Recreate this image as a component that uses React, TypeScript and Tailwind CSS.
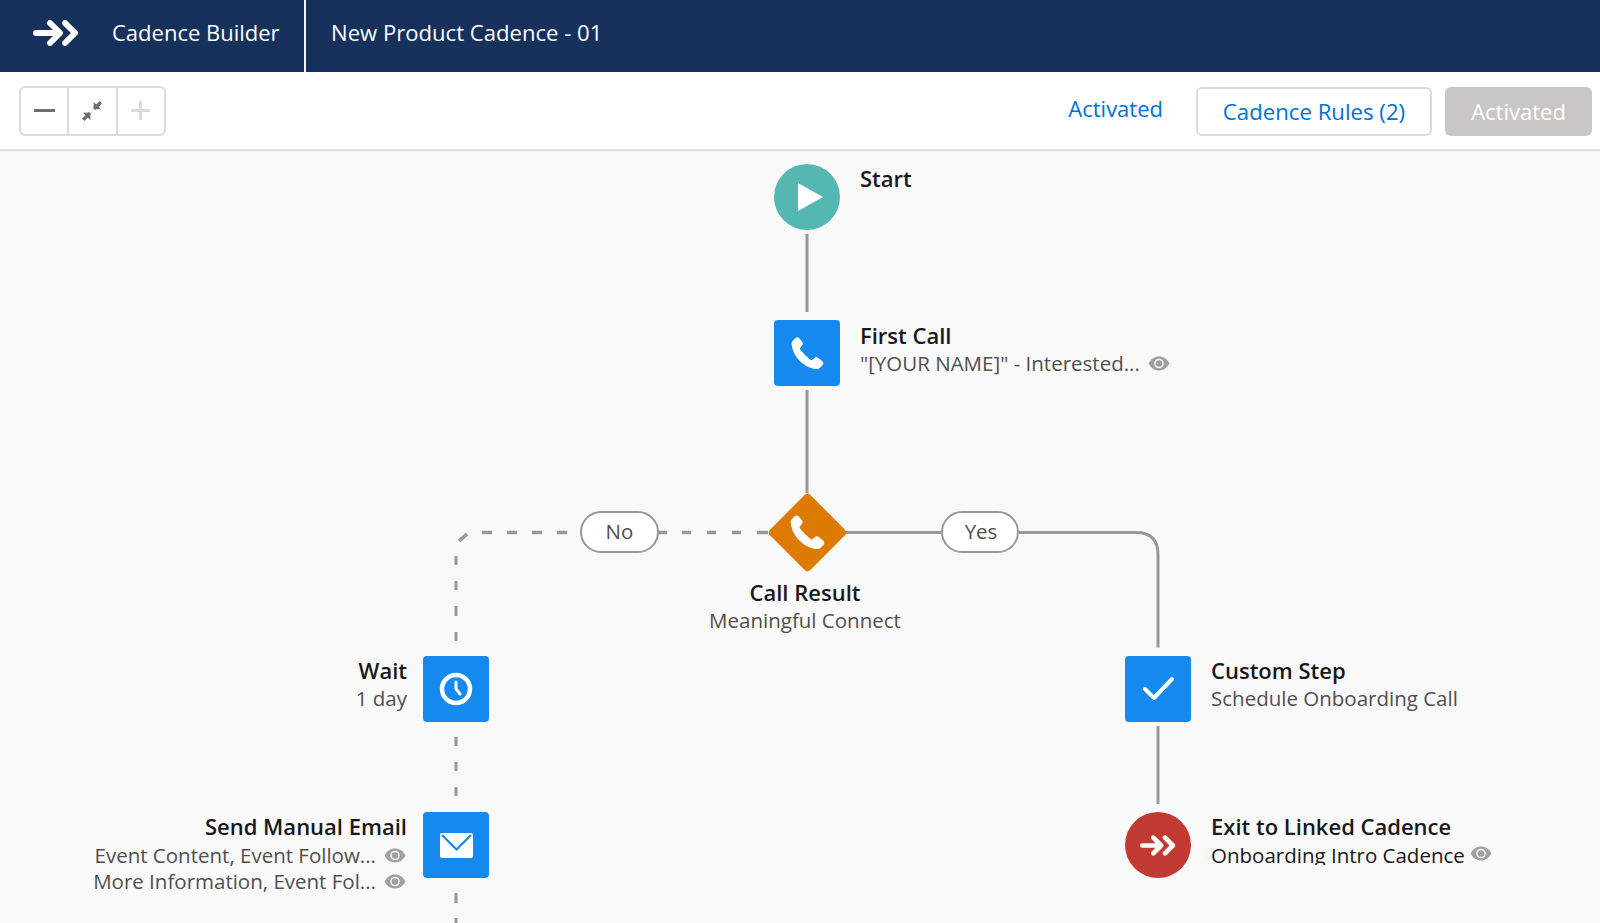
import { ReactNode } from "react"

const font = "font-['Open_Sans','Noto_Sans',sans-serif]"

function PhoneIcon({ className }: { className?: string }) {
  return (
    <svg viewBox="0 0 52 52" className={className} fill="white">
      <path d="M48.5 37.7l-5.7-4.6c-1.3-1-3.2-1.1-4.5-.1l-4.9 3.6c-.6.5-1.5.4-2.1-.2L23 28.9l-7.5-8.3c-.5-.5-.6-1.4-.2-2l3.6-4.9c1-1.4.9-3.2-.1-4.5L14.2 3.5C12.8 1.7 10.1 1.6 8.5 3.2L3.6 8.1C2.8 8.9 2.4 10 2.4 11.1c.5 9.9 5 19.4 12.6 27 7.6 7.5 17 12 27 12.5 1.1.1 2.2-.4 3-1.2l4.7-4.7c1.8-1.6 1.7-4.3-.2-6z" />
    </svg>
  )
}

function LinkedArrows({ className }: { className?: string }) {
  return (
    <svg viewBox="0 0 46 26" className={className} fill="none" stroke="white" strokeWidth="6" strokeLinecap="round" strokeLinejoin="round">
      <path d="M3 13h22M17 3l10 10-10 10" />
      <path d="M32 3l10 10-10 10" />
    </svg>
  )
}

function Eye() {
  return (
    <svg viewBox="0 0 22 15" className="w-[22px] h-[15px] shrink-0">
      <path d="M0.500 7.500C3 3 6.600 0.500 11 0.500S19 3 21.500 7.500C19 12 15.400 14.500 11 14.500S3 12 0.500 7.500z" fill="#a0a0a0" />
      <circle cx="11" cy="7.500" r="4.800" fill="#f9f9f9" />
      <circle cx="11" cy="7.500" r="3.300" fill="#a0a0a0" />
    </svg>
  )
}

function Title({ children }: { children: ReactNode }) {
  return <div className="text-[22px] leading-[28px] font-semibold text-[#181818] whitespace-nowrap">{children}</div>
}

function Sub({ children, eye, className }: { children: ReactNode; eye?: boolean; className?: string }) {
  return (
    <div className={`flex items-center gap-[8px] text-[20.5px] leading-[26px] text-[#514f4d] whitespace-nowrap ${className ?? ""}`}>
      <span>{children}</span>
      {eye && <Eye />}
    </div>
  )
}

function Square({ children }: { children: ReactNode }) {
  return <div className="w-[66px] h-[66px] shrink-0 rounded bg-[#1589ee] flex items-center justify-center">{children}</div>
}

function Connectors() {
  return (
    <svg viewBox="0 0 1600 771" className="absolute inset-0 w-[1600px] h-[771px]" fill="none" stroke="#999896" strokeWidth="3">
      <path d="M807 82v78M807 238v103" />
      <path d="M846 380.500h95M1019 380.500h117q22 0 22 22v93M1158 574v78" />
      {/* No branch */}
      <g strokeWidth="3.500">
        <path d="M658 380.500h9M682 380.500h9M707 380.500h9M732 380.500h9M757 380.500h11" />
        <path d="M482 380.500h10M507 380.500h10M532 380.500h10M557 380.500h10M459 389l8-7" />
      </g>
      <path d="M456 404v9M456 429v9M456 454v10M456 480v9M456 585v9M456 610v9M456 635v9M456 741v10M456 766v5" />
    </svg>
  )
}

export default function App() {
  return (
    <div className={`h-[923px] w-[1600px] overflow-hidden flex flex-col bg-[#f9f9f9] ${font}`}>
      <header className="h-[72px] shrink-0 bg-[#16325c] flex items-center text-white text-[22px]">
        <div className="w-[306px] h-full flex items-center border-r-2 border-[#f4f6f9] pl-[33px]">
          <LinkedArrows className="w-[46px] h-[26px] -mt-[6px]" />
          <span className="ml-[33px] pb-[8px]">Cadence Builder</span>
        </div>
        <span className="ml-[25px] pb-[7px] text-[22.1px]">New Product Cadence - 01</span>
      </header>

      <div className="h-[79px] shrink-0 bg-white border-b-2 border-[#e2e1df] flex items-center pl-[19px] pr-[8px]">
        <div className="flex h-[50px] w-[147px] border-2 border-[#dddbda] rounded-md divide-x-2 divide-[#dddbda]">
          <div className="flex-1 flex items-center justify-center">
            <div className="w-[21px] h-[3px] bg-[#706e6b]" />
          </div>
          <div className="flex-1 flex items-center justify-center">
            <svg viewBox="0 0 20 20" className="w-[22px] h-[22px]" fill="#706e6b" stroke="#706e6b">
              <path d="M12 8V3l5 5z" />
              <path d="M8 12v5l-5-5z" />
              <path d="M12 8l6-6M8 12l-6 6" strokeWidth="3" />
            </svg>
          </div>
          <div className="flex-1 flex items-center justify-center relative">
            <div className="w-[19px] h-[3px] bg-[#dddbda]" />
            <div className="absolute w-[3px] h-[19px] bg-[#dddbda]" />
          </div>
        </div>
        <span className="ml-auto -mt-[4px] text-[22px] text-[#0070d2]">Activated</span>
        <button className="ml-[33px] mt-[2px] w-[236px] h-[49px] border-2 border-[#dddbda] rounded-md bg-white text-[22.2px] text-[#0070d2]">Cadence Rules (2)</button>
        <button className="ml-[13px] mt-[2px] w-[147px] h-[49px] rounded-md bg-[#c9c7c5] text-[22px] text-white">Activated</button>
      </div>

      <main className="relative flex-1 mt-[1px] overflow-hidden">
        <Connectors />

        {/* Start */}
        <div className="absolute left-[774px] top-[12px] flex gap-[20px]">
          <div className="w-[66px] h-[66px] rounded-full bg-[#54b7b1] flex items-center justify-center">
            <svg viewBox="0 0 26 28" className="w-[26px] h-[28px] ml-[5px]" fill="white">
              <path d="M1 0L26 14L1 28z" />
            </svg>
          </div>
          <Title>Start</Title>
        </div>

        {/* First Call */}
        <div className="absolute left-[774px] top-[168px] flex gap-[20px]">
          <Square><PhoneIcon className="w-[34px] h-[34px]" /></Square>
          <div className="pt-[1px]">
            <Title>First Call</Title>
            <Sub eye className="mt-[1px]">"[YOUR NAME]" - Interested...</Sub>
          </div>
        </div>

        {/* Call Result */}
        <div className="absolute left-[767px] top-[340px] w-[80px] h-[80px] flex items-center justify-center">
          <div className="w-[57px] h-[57px] rounded bg-[#dd7a01] rotate-45" />
          <PhoneIcon className="absolute w-[36px] h-[36px]" />
        </div>
        <div className="absolute left-[605px] top-[426px] w-[400px] text-center">
          <Title>Call Result</Title>
          <div className="mt-[1px] text-[20.5px] leading-[26px] text-[#514f4d]">Meaningful Connect</div>
        </div>

        <div className="absolute left-[580px] top-[359px] w-[79px] h-[42px] rounded-full border-2 border-[#999896] bg-white flex items-center justify-center pb-[1px] text-[20.5px] text-[#514f4d]">No</div>
        <div className="absolute left-[941px] top-[359px] w-[78px] h-[42px] rounded-full border-2 border-[#999896] bg-white flex items-center justify-center pl-[2px] pb-[1px] text-[20.5px] text-[#514f4d]">Yes</div>

        {/* Wait */}
        <div className="absolute right-[1111px] top-[504px] flex gap-[16px]">
          <div className="flex flex-col items-end">
            <Title>Wait</Title>
            <Sub className="mt-[1px]">1 day</Sub>
          </div>
          <Square>
            <svg viewBox="0 0 34 34" className="w-[34px] h-[34px]" fill="none" stroke="white" strokeWidth="4.500" strokeLinecap="round">
              <circle cx="17" cy="17" r="14" />
              <path d="M17 10v7l4 5" strokeWidth="3" />
            </svg>
          </Square>
        </div>

        {/* Send Manual Email */}
        <div className="absolute right-[1111px] top-[660px] flex gap-[16px]">
          <div className="flex flex-col items-end">
            <Title>Send Manual Email</Title>
            <Sub eye className="mt-[2px] pr-[1px]">Event Content, Event Follow...</Sub>
            <Sub eye className="pr-[1px]">More Information, Event Fol...</Sub>
          </div>
          <Square>
            <svg viewBox="0 0 33 25" className="w-[33px] h-[25px]">
              <rect width="33" height="25" rx="2" fill="white" />
              <path d="M2 2l14.500 14.500L31 2" fill="none" stroke="#1589ee" strokeWidth="2.200" />
            </svg>
          </Square>
        </div>

        {/* Custom Step */}
        <div className="absolute left-[1125px] top-[504px] flex gap-[20px]">
          <Square>
            <svg viewBox="0 0 33 24" className="w-[33px] h-[24px] -mt-[2px]" fill="none" stroke="white" strokeWidth="4" strokeLinecap="round" strokeLinejoin="round">
              <path d="M3 13l9 9L30 3" />
            </svg>
          </Square>
          <div>
            <Title>Custom Step</Title>
            <Sub className="mt-[1px]">Schedule Onboarding Call</Sub>
          </div>
        </div>

        {/* Exit */}
        <div className="absolute left-[1125px] top-[660px] flex gap-[20px]">
          <div className="w-[66px] h-[66px] rounded-full bg-[#c23934] flex items-center justify-center">
            <LinkedArrows className="w-[36px] h-[21px]" />
          </div>
          <div>
            <Title>Exit to Linked Cadence</Title>
            <div className="mt-[2px] flex items-center gap-[5px] text-[20.5px] leading-[26px] text-[#181818]">
              <span className="h-[23px] overflow-hidden whitespace-nowrap">Onboarding Intro Cadence</span>
              <Eye />
            </div>
          </div>
        </div>
      </main>
    </div>
  )
}
